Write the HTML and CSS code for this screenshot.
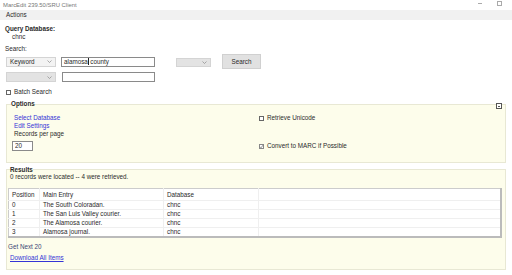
FILE: index.html
```html
<!DOCTYPE html>
<html lang="en">
<head>
    <meta charset="UTF-8">
    <title>MarcEdit Z39.50/SRU Client</title>
    <link rel="stylesheet" href="styles.css">
</head>
<body>
    <div class="titlebar">
        <span>MarcEdit 239.50/SRU Client</span>
        <div class="win-controls">
            <span class="win-min"></span>
            <span class="win-max"></span>
        </div>
    </div>

    <div class="menubar">Actions</div>

    <div class="query">
        <div class="label-bold">Query Database:</div>
        <div class="db-name">chnc</div>
        <div class="search-label">Search:</div>
    </div>

    <div class="search-row">
        <div class="combo combo-keyword">
            <span>Keyword</span>
            <svg class="chev" width="5" height="3" viewBox="0 0 5 3"><polyline points="0.5,0.5 2.5,2.5 4.5,0.5" fill="none" stroke="#888" stroke-width="0.7"/></svg>
        </div>
        <div class="text-input input-main">alamosa<span class="caret"></span>county</div>
        <div class="combo combo-op">
            <span></span>
            <svg class="chev" width="5" height="3" viewBox="0 0 5 3"><polyline points="0.5,0.5 2.5,2.5 4.5,0.5" fill="none" stroke="#888" stroke-width="0.7"/></svg>
        </div>
        <button class="btn-search">Search</button>
    </div>

    <div class="search-row row-second">
        <div class="combo combo-empty">
            <span></span>
            <svg class="chev" width="5" height="3" viewBox="0 0 5 3"><polyline points="0.5,0.5 2.5,2.5 4.5,0.5" fill="none" stroke="#888" stroke-width="0.7"/></svg>
        </div>
        <div class="text-input input-second"></div>
    </div>

    <label class="check-row batch">
        <span class="box"></span>Batch Search
    </label>

    <div class="group-wrap options-wrap">
        <fieldset class="group">
            <legend>Options</legend>
            <div class="options-body">
                <div class="options-left">
                    <a class="link">Select Database</a>
                    <a class="link">Edit Settings</a>
                    <div>Records per page</div>
                    <div class="text-input input-records">20</div>
                </div>
                <div class="options-right">
                    <label class="check-row"><span class="box"></span>Retrieve Unicode</label>
                    <label class="check-row convert">
                        <span class="box checked">
                            <svg width="5" height="5" viewBox="0 0 5 5"><polyline points="0.8,2.6 2,3.8 4.2,1" fill="none" stroke="#777" stroke-width="0.8"/></svg>
                        </span>Convert to MARC if Possible
                    </label>
                </div>
            </div>
        </fieldset>
        <span class="collapse"></span>
    </div>

    <div class="group-wrap results-wrap">
        <fieldset class="group">
            <legend>Results</legend>
            <div class="results-body">
                <div class="summary">0 records were located -- 4 were retrieved.</div>
                <table class="grid">
                    <thead>
                        <tr><th class="c-pos">Position</th><th class="c-entry">Main Entry</th><th class="c-db">Database</th><th></th></tr>
                    </thead>
                    <tbody>
                        <tr><td>0</td><td>The South Coloradan.</td><td>chnc</td><td></td></tr>
                        <tr><td>1</td><td>The San Luis Valley courier.</td><td>chnc</td><td></td></tr>
                        <tr><td>2</td><td>The Alamosa courier.</td><td>chnc</td><td></td></tr>
                        <tr><td>3</td><td>Alamosa journal.</td><td>chnc</td><td></td></tr>
                    </tbody>
                </table>
                <div class="next">Get Next 20</div>
                <a class="link download">Download All Items</a>
            </div>
        </fieldset>
    </div>
</body>
</html>
```

FILE: styles.css
```css
* {
    margin: 0;
    padding: 0;
    box-sizing: border-box;
}

body {
    font-family: "Liberation Sans", Arial, sans-serif;
    font-size: 6.3px;
    line-height: 8px;
    color: #2a2a2a;
    background: #fff;
    width: 512px;
    height: 275px;
    overflow: hidden;
}

.titlebar {
    height: 10px;
    display: flex;
    align-items: center;
    justify-content: space-between;
    padding-left: 3px;
    font-size: 5.9px;
    color: #777;
}

.win-controls {
    display: flex;
    align-items: center;
    gap: 15px;
    padding-right: 10px;
}

.win-min {
    width: 4px;
    height: 1px;
    background: #aaa;
    margin-top: -3px;
}

.win-max {
    width: 5px;
    height: 5px;
    border: 1px solid #aaa;
    margin-top: -4px;
}

.menubar {
    height: 10px;
    background: #f1f1f1;
    display: flex;
    align-items: center;
    padding-left: 6px;
}

.query {
    padding: 5px 0 0 5px;
}

.label-bold {
    font-weight: bold;
}

.db-name {
    padding-left: 7px;
}

.search-label {
    margin-top: 4px;
}

.search-row {
    display: flex;
    align-items: center;
    height: 15px;
    margin: 1px 0 0 6px;
}

.row-second {
    height: 10px;
    margin-top: 3px;
}

.combo {
    height: 10px;
    display: flex;
    align-items: center;
    justify-content: space-between;
    padding: 0 3px 0 3px;
    border: 1px solid #d4d4d4;
}

.combo-keyword {
    width: 50px;
    background: #f3f3f3;
}

.combo-empty {
    width: 50px;
    background: #e3e3e3;
}

.combo-op {
    width: 35px;
    height: 9px;
    margin: 2px 0 0 21px;
    background: #e3e3e3;
}

.text-input {
    height: 10px;
    border: 1px solid #8a8a8a;
    background: #fff;
    padding-left: 2px;
    line-height: 8px;
}

.input-main {
    width: 94px;
    margin-left: 5px;
}

.input-second {
    width: 93px;
    margin-left: 6px;
}

.caret {
    display: inline-block;
    width: 1px;
    height: 7px;
    background: #222;
    vertical-align: -1px;
    margin: 0 1px 0 0.5px;
}

.btn-search {
    width: 39px;
    height: 15px;
    margin-left: 11px;
    background: #e1e1e1;
    border: 1px solid #d0d0d0;
    font: inherit;
    color: #2a2a2a;
}

.check-row {
    display: flex;
    align-items: center;
    gap: 3px;
    height: 8px;
}

.batch {
    margin: 6px 0 0 6px;
}

.box {
    width: 5px;
    height: 5px;
    border: 1px solid #666;
    background: #fff;
    display: flex;
    align-items: center;
    justify-content: center;
}

.box.checked {
    border-color: #888;
}

.box svg {
    flex-shrink: 0;
}

.group-wrap {
    position: relative;
    margin-left: 6px;
    width: 500px;
}

.options-wrap {
    margin-top: 4px;
}

.results-wrap {
    margin-top: 3px;
}

.group {
    border: 1px solid #e8e8d4;
    background: #fdfdeb;
    min-width: 0;
}

.group legend {
    font-weight: bold;
    padding: 0;
    margin-left: 4px;
    line-height: 8px;
}

.results-wrap .group legend {
    margin-left: 3px;
    line-height: 7px;
}

.options-body {
    display: grid;
    grid-template-columns: 245px 1fr;
    align-items: start;
    padding: 6px 0 11px 7px;
}

.options-left {
    display: flex;
    flex-direction: column;
    align-items: flex-start;
}

.link {
    color: #3434d6;
}

.input-records {
    width: 21px;
    margin: 3px 0 0 -2px;
}

.convert {
    margin-top: 20px;
}

.collapse {
    position: absolute;
    top: 3px;
    right: 4px;
    width: 6px;
    height: 6px;
    border: 1px solid #555;
    background: #fff;
}

.collapse::after {
    content: "";
    position: absolute;
    left: 1px;
    top: 1.5px;
    width: 2px;
    height: 1px;
    background: #555;
}

.results-body {
    padding: 0 0 7px 0;
}

.summary {
    padding-left: 3px;
}

.grid {
    width: 494px;
    margin: 7px 0 0 1px;
    border-collapse: collapse;
    background: #fff;
    border-top: 1px solid #cccccc;
    border-left: 1px solid #cccccc;
    border-right: 2px solid #bbbbbb;
    border-bottom: 2px solid #bbbbbb;
}

.grid th,
.grid td {
    font-weight: normal;
    text-align: left;
    height: 9px;
    line-height: 8px;
    padding: 0 0 0 3px;
    border-right: 1px solid #efefef;
    border-bottom: 1px solid #efefef;
    white-space: nowrap;
}

.grid th {
    height: 12px;
}

.grid th:last-child,
.grid td:last-child {
    border-right: none;
}

.grid tr:last-child td {
    border-bottom: none;
}

.c-pos {
    width: 31px;
}

.c-entry {
    width: 124px;
}

.c-db {
    width: 95px;
}

.next {
    margin-top: 5px;
    padding-left: 1px;
    color: #3b4575;
}

.download {
    display: inline-block;
    margin: 3px 0 0 3px;
    text-decoration: underline;
}
```
